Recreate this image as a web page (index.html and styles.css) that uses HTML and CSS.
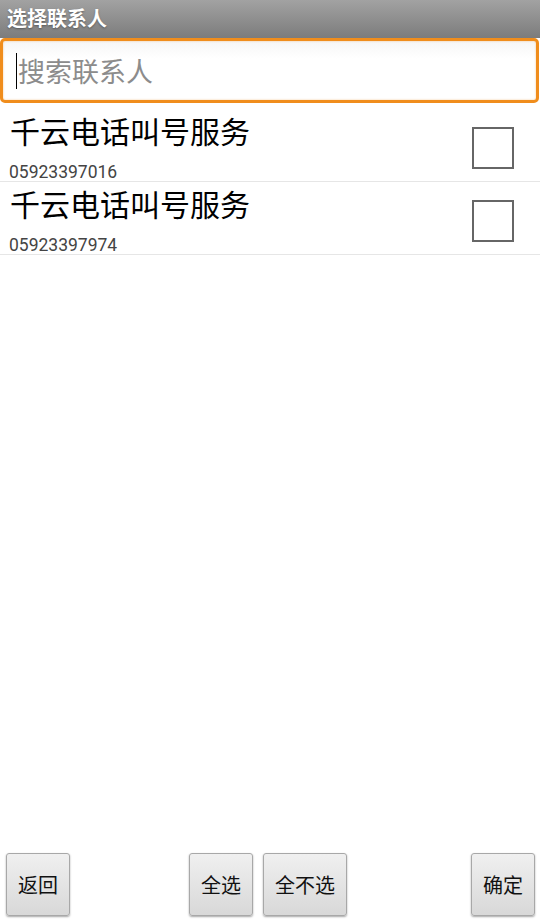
FILE: index.html
```html
<!DOCTYPE html>
<html lang="zh-CN">
<head>
    <meta charset="UTF-8">
    <meta name="viewport" content="width=device-width, initial-scale=1.0">
    <title>选择联系人</title>
    <link rel="stylesheet" href="styles.css">
</head>
<body>
    <div class="screen">
        <header class="title-bar">选择联系人</header>

        <div class="search-box">
            <span class="caret"></span>
            <span class="placeholder">搜索联系人</span>
        </div>

        <ul class="contact-list">
            <li class="contact">
                <div class="contact-info">
                    <div class="contact-name">千云电话叫号服务</div>
                    <div class="contact-phone">05923397016</div>
                </div>
                <span class="checkbox"></span>
            </li>
            <li class="contact">
                <div class="contact-info">
                    <div class="contact-name">千云电话叫号服务</div>
                    <div class="contact-phone">05923397974</div>
                </div>
                <span class="checkbox"></span>
            </li>
        </ul>

        <footer class="button-bar">
            <button class="btn">返回</button>
            <div class="btn-group">
                <button class="btn">全选</button>
                <button class="btn">全不选</button>
            </div>
            <button class="btn">确定</button>
        </footer>
    </div>
</body>
</html>
```

FILE: styles.css
```css
* {
    margin: 0;
    padding: 0;
    box-sizing: border-box;
    font-family: "Noto Sans CJK SC", "Noto Sans", Roboto, sans-serif;
}

body {
    background: #ffffff;
}

.screen {
    width: 540px;
    height: 924px;
    display: flex;
    flex-direction: column;
    overflow: hidden;
}

/* Title bar */
.title-bar {
    height: 38px;
    padding-left: 7px;
    background: linear-gradient(#a2a2a2, #7c7c7c);
    color: #ffffff;
    font-size: 20px;
    font-weight: bold;
    line-height: 36px;
    text-shadow: 0 1px 2px rgba(0,0,0,0.35);
}

/* Search box */
.search-box {
    height: 65px;
    margin: 0 1px 0 0;
    border: 3px solid #f08d1c;
    border-radius: 5px;
    background: linear-gradient(#f6f6f6, #ffffff 30%);
    display: flex;
    align-items: center;
    padding-left: 13px;
    box-shadow: inset 0 0 2px rgba(240,141,28,0.5);
}

.caret {
    width: 1px;
    height: 36px;
    background: #000000;
    margin-right: 1px;
}

.placeholder {
    font-size: 27px;
    color: #8c8c8c;
    line-height: 1;
}

/* Contacts */
.contact-list {
    list-style: none;
    margin-top: 5px;
    flex: 1;
}

.contact {
    display: flex;
    align-items: flex-start;
    justify-content: space-between;
    height: 73px;
    border-bottom: 1px solid #e6e6e6;
    padding: 2px 26px 0 10px;
}

.contact:first-child {
    height: 74px;
    padding-top: 3px;
}

.contact-info {
    display: flex;
    flex-direction: column;
}

.contact-name {
    font-size: 30px;
    color: #000000;
    line-height: 38px;
}

.contact-phone {
    font-family: Roboto, "Noto Sans", sans-serif;
    font-size: 17.5px;
    color: #444444;
    line-height: 22px;
    margin-top: 12px;
    margin-left: -1px;
}

.checkbox {
    width: 42px;
    height: 42px;
    border: 2px solid #666666;
    margin-top: 16px;
}

/* Bottom buttons */
.button-bar {
    display: flex;
    align-items: center;
    padding: 0 5px 8px 6px;
}

.btn-group {
    display: flex;
    gap: 10px;
    margin-left: 119px;
    margin-right: auto;
}

.btn {
    height: 63px;
    min-width: 64px;
    padding: 0 11px;
    border: 1px solid #a8a8a8;
    border-radius: 3px;
    background: linear-gradient(#f0f0f0, #d8d8d8);
    box-shadow: 0 1px 2px rgba(0,0,0,0.35);
    font-size: 20px;
    color: #111111;
}
```
